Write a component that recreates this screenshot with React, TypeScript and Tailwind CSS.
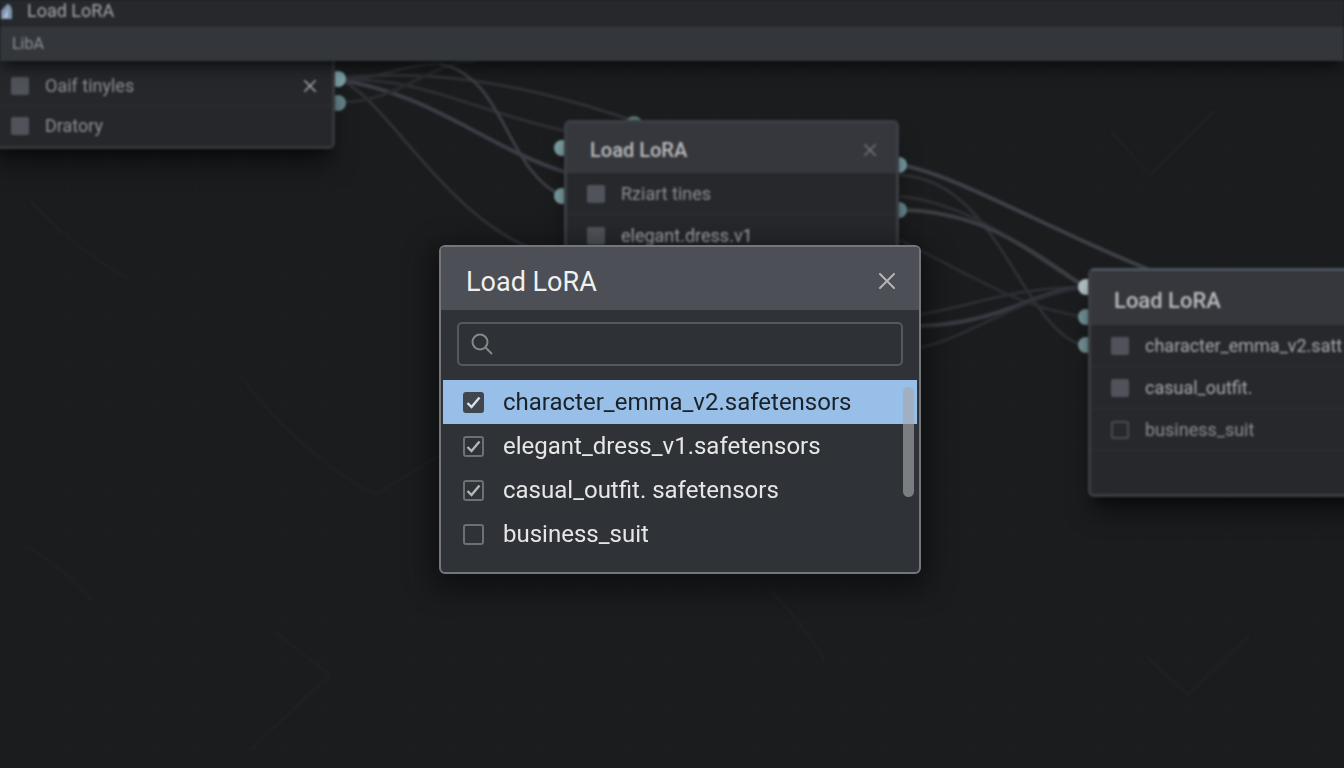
import React, { useState } from 'react';
import { clsx } from 'clsx';

// --- Data ---

const LORAS = [
  { id: 'emma', name: 'character_emma_v2.safetensors', checked: true },
  { id: 'dress', name: 'elegant_dress_v1.safetensors', checked: true },
  { id: 'casual', name: 'casual_outfit. safetensors', checked: true },
  { id: 'suit', name: 'business_suit', checked: false },
];

const WIRES = [
  { d: 'M338 80 C380 80 400 64 440 64', color: '#2e3035', width: 3 },
  { d: 'M338 78 C420 70 510 78 634 121', color: '#303237', width: 3 },
  { d: 'M338 80 C420 76 470 110 566 131', color: '#2d2f34', width: 3 },
  { d: 'M338 80 C430 92 490 150 568 173', color: '#3b3e46', width: 4 },
  { d: 'M338 80 C380 90 440 210 528 247', color: '#303238', width: 3 },
  { d: 'M338 102 C400 104 430 60 475 62', color: '#2a2c30', width: 3 },
  { d: 'M440 64 C505 76 505 170 562 196', color: '#3b3e44', width: 3 },
  { d: 'M900 165 C950 172 1050 230 1150 270', color: '#3d4046', width: 4 },
  { d: 'M900 175 C1000 180 1020 330 1085 346', color: '#2e3035', width: 3 },
  { d: 'M900 196 C980 206 1020 250 1085 287', color: '#2d2f34', width: 3 },
  { d: 'M900 210 C980 210 1030 250 1085 287', color: '#3c3e43', width: 4 },
  { d: 'M900 240 C980 280 1020 308 1085 317', color: '#2b2d32', width: 3 },
  { d: 'M918 315 C980 304 1010 288 1085 287', color: '#2c2e33', width: 3 },
  { d: 'M918 326 C1000 324 1030 292 1085 287', color: '#393c42', width: 4 },
  { d: 'M918 348 C970 338 1020 296 1085 287', color: '#2b2d32', width: 3 },
];

const PORTS = [
  { x: 338, y: 79, color: '#7fa3a9' },
  { x: 338, y: 103, color: '#67858d' },
  { x: 562, y: 148, color: '#7c9ea3' },
  { x: 562, y: 196, color: '#7c9ea3' },
  { x: 634, y: 124, color: '#55706f' },
  { x: 899, y: 165, color: '#759da3' },
  { x: 899, y: 210, color: '#66878e' },
  { x: 1086, y: 287, color: '#b0c0c5' },
  { x: 1086, y: 317, color: '#75959a' },
  { x: 1086, y: 345, color: '#75959a' },
];

// --- Components ---

function CloseIcon({ className }: { className?: string }) {
  return (
    <svg viewBox="0 0 16 16" className={className} fill="none" stroke="currentColor" strokeWidth="2" strokeLinecap="round">
      <path d="M1 1 15 15M15 1 1 15" />
    </svg>
  );
}

function NodeRow({ label, on = true, bright, last, compact, children }: {
  label: string;
  on?: boolean;
  bright?: boolean;
  last?: boolean;
  compact?: boolean;
  children?: React.ReactNode;
}) {
  return (
    <li className={clsx("flex items-center gap-4 pl-5 pr-4", compact ? "h-10" : "h-[42px]", !last && "border-b border-[#2d3035]")}>
      <span className={clsx("size-[18px] shrink-0 rounded-xs", on ? "bg-[#505359]" : "border-2 border-[#484b50]")} />
      <span className={clsx("flex-1 whitespace-nowrap text-lg", bright ? "text-[#a6a8aa]" : "text-[#8c8f92]")}>{label}</span>
      {children}
    </li>
  );
}

function LoraRow({ name, checked, active, onChange }: {
  name: string;
  checked: boolean;
  active: boolean;
  onChange: () => void;
}) {
  return (
    <li>
      <label className={clsx("flex h-11 items-center gap-[19px] pl-5 text-2xl", active ? "bg-[#97bfe8] text-[#1c2128]" : "text-[#e6e6e6]")}>
        <span className="grid place-items-center">
          <input
            type="checkbox"
            checked={checked}
            onChange={onChange}
            className={clsx(
              "col-start-1 row-start-1 size-[21px] appearance-none rounded-[3px] border-2",
              active ? "border-[#41464d] bg-[#41464d]" : "border-[#6d7074]"
            )}
          />
          {checked && (
            <svg
              viewBox="0 0 21 21"
              className={clsx("pointer-events-none col-start-1 row-start-1 size-[21px]", active ? "text-[#d5e2ef]" : "text-[#b4b6b8]")}
              fill="none"
              stroke="currentColor"
              strokeWidth="2.4"
            >
              <path d="M4.5 11 8.5 15 16.5 5.5" />
            </svg>
          )}
        </span>
        {name}
      </label>
    </li>
  );
}

function LoadDialog() {
  const [items, setItems] = useState(LORAS);
  const [query, setQuery] = useState('');

  const toggle = (id: string) => {
    setItems(prev => prev.map(item => (item.id === id ? { ...item, checked: !item.checked } : item)));
  };

  return (
    <div
      role="dialog"
      aria-labelledby="dialog-title"
      className="w-[482px] overflow-hidden rounded-md border-2 border-[#74777a] bg-[#2f3236] shadow-[0_8px_28px_8px_rgba(0,0,0,0.45)]"
    >
      <header className="flex h-[63px] items-center justify-between bg-[#4c4f55] pl-[25px] pr-6 pt-2">
        <h1 id="dialog-title" className="text-[27px] text-[#f0f0f0]">Load LoRA</h1>
        <button aria-label="Close" className="mb-1 text-[#b4b5b7]">
          <CloseIcon className="size-4" />
        </button>
      </header>

      <div className="px-4 pb-[14px] pt-3">
        <label className="flex h-11 items-center rounded-[5px] border-2 border-[#55585c] bg-[#2e3135] px-3">
          <svg viewBox="0 0 22 22" className="size-[22px] shrink-0 text-[#85878a]" fill="none" stroke="currentColor" strokeWidth="2">
            <circle cx="9" cy="9" r="7.5" />
            <path d="M14.5 14.5 21 21" />
          </svg>
          <input
            type="text"
            aria-label="Search"
            value={query}
            onChange={e => setQuery(e.target.value)}
            className="min-w-0 flex-1 bg-transparent px-3 text-xl text-[#e6e6e6] outline-none"
          />
        </label>
      </div>

      <div className="relative px-[2px] pb-4">
        <ul>
          {items.filter(item => item.name.includes(query)).map(item => (
            <LoraRow
              key={item.id}
              name={item.name}
              checked={item.checked}
              active={item.id === 'emma'}
              onChange={() => toggle(item.id)}
            />
          ))}
        </ul>
        {/* Scroll thumb */}
        <div className="absolute right-[5px] top-[7px] h-[110px] w-[11px] rounded-full bg-[#a5a8aa]/65" />
      </div>
    </div>
  );
}

export default function App() {
  return (
    <div className="relative h-screen overflow-hidden bg-[#1b1c1e] font-[Roboto,sans-serif]">
      {/* Out of focus workspace */}
      <div className="flex h-full flex-col blur-[1px]">
        <header className="relative z-10 shadow-lg shadow-black/50">
          <div className="flex h-[27px] items-center gap-[13px] bg-[#26282c] pb-[6px]">
            <svg viewBox="0 0 14 18" className="h-[18px] w-[14px]">
              <path d="M1 17V9L7 2Q11 2 12 8V17Z" fill="#7f93ad" />
              <path d="M3 16 8 6V16Z" fill="#aec0d6" />
            </svg>
            <span className="text-lg text-[#a3a5a7]">Load LoRA</span>
          </div>
          <nav className="flex h-[34px] items-center bg-[#33363b] pl-3">
            <a href="#lora" className="text-base text-[#8d8f93]">LibA</a>
          </nav>
        </header>

        <main className="flex-1 bg-[linear-gradient(#1e1f21_1px,transparent_1px),linear-gradient(90deg,#1e1f21_1px,transparent_1px)] bg-size-[43px_43px] bg-position-[24px_42px]" />

        <svg className="absolute left-0 top-0" width="1344" height="768" fill="none">
          <g stroke="#1f2022" strokeWidth="3">
            <path d="M30 200 C60 235 90 255 130 281M240 375 C280 430 330 470 375 495L440 455M25 545 Q60 565 92 600M275 632 330 675 250 750" />
            <path d="M770 590 Q800 620 825 660M1145 655 1188 695 1250 635M1110 130 1150 175 1215 110" />
          </g>
          {WIRES.map(wire => (
            <path key={wire.d} d={wire.d} stroke={wire.color} strokeWidth={wire.width} />
          ))}
          {PORTS.map(port => (
            <circle key={`${port.x}-${port.y}`} cx={port.x} cy={port.y} r="8" fill={port.color} />
          ))}
        </svg>

        <section className="absolute -left-[9px] top-[61px] w-[344px] rounded-b-md border-b-3 border-r-3 border-[#35373c] bg-[#25272b] pt-[5px] shadow-xl shadow-black/50">
          <ul>
            <NodeRow label="Oaif tinyles" compact>
              <button aria-label="Close" className="text-[#a9aaab]"><CloseIcon className="size-3" /></button>
            </NodeRow>
            <NodeRow label="Dratory" compact last />
          </ul>
        </section>

        <section className="absolute left-[564px] top-[120px] w-[335px] rounded-md border-3 border-[#3b3e43] bg-[#26282c] shadow-xl shadow-black/50">
          <header className="flex h-[50px] items-center justify-between bg-[#35373c] pl-[23px] pr-5 pt-1">
            <h2 className="text-xl font-medium text-[#b9babc]">Load LoRA</h2>
            <button aria-label="Close" className="text-[#74767a]"><CloseIcon className="size-3" /></button>
          </header>
          <ul>
            <NodeRow label="Rziart tines" />
            <NodeRow label="elegant.dress.v1" bright />
            <NodeRow label="casual_outfit." last />
          </ul>
        </section>

        <section className="absolute left-[1088px] top-[268px] w-[335px] rounded-md border-3 border-[#3b3e43] border-t-[#4b545b] bg-[#26282c] shadow-xl shadow-black/50">
          <header className="flex h-[54px] items-center bg-[#35373c] pl-[23px] pt-1">
            <h2 className="text-[22px] font-medium text-[#b9babc]">Load LoRA</h2>
          </header>
          <ul className="pb-[43px]">
            <NodeRow label="character_emma_v2.satt" bright />
            <NodeRow label="casual_outfit." bright />
            <NodeRow label="business_suit" on={false} />
          </ul>
        </section>
      </div>

      <div className="absolute inset-0 z-20 flex items-start justify-center pl-4 pt-[245px]">
        <LoadDialog />
      </div>
    </div>
  );
}
